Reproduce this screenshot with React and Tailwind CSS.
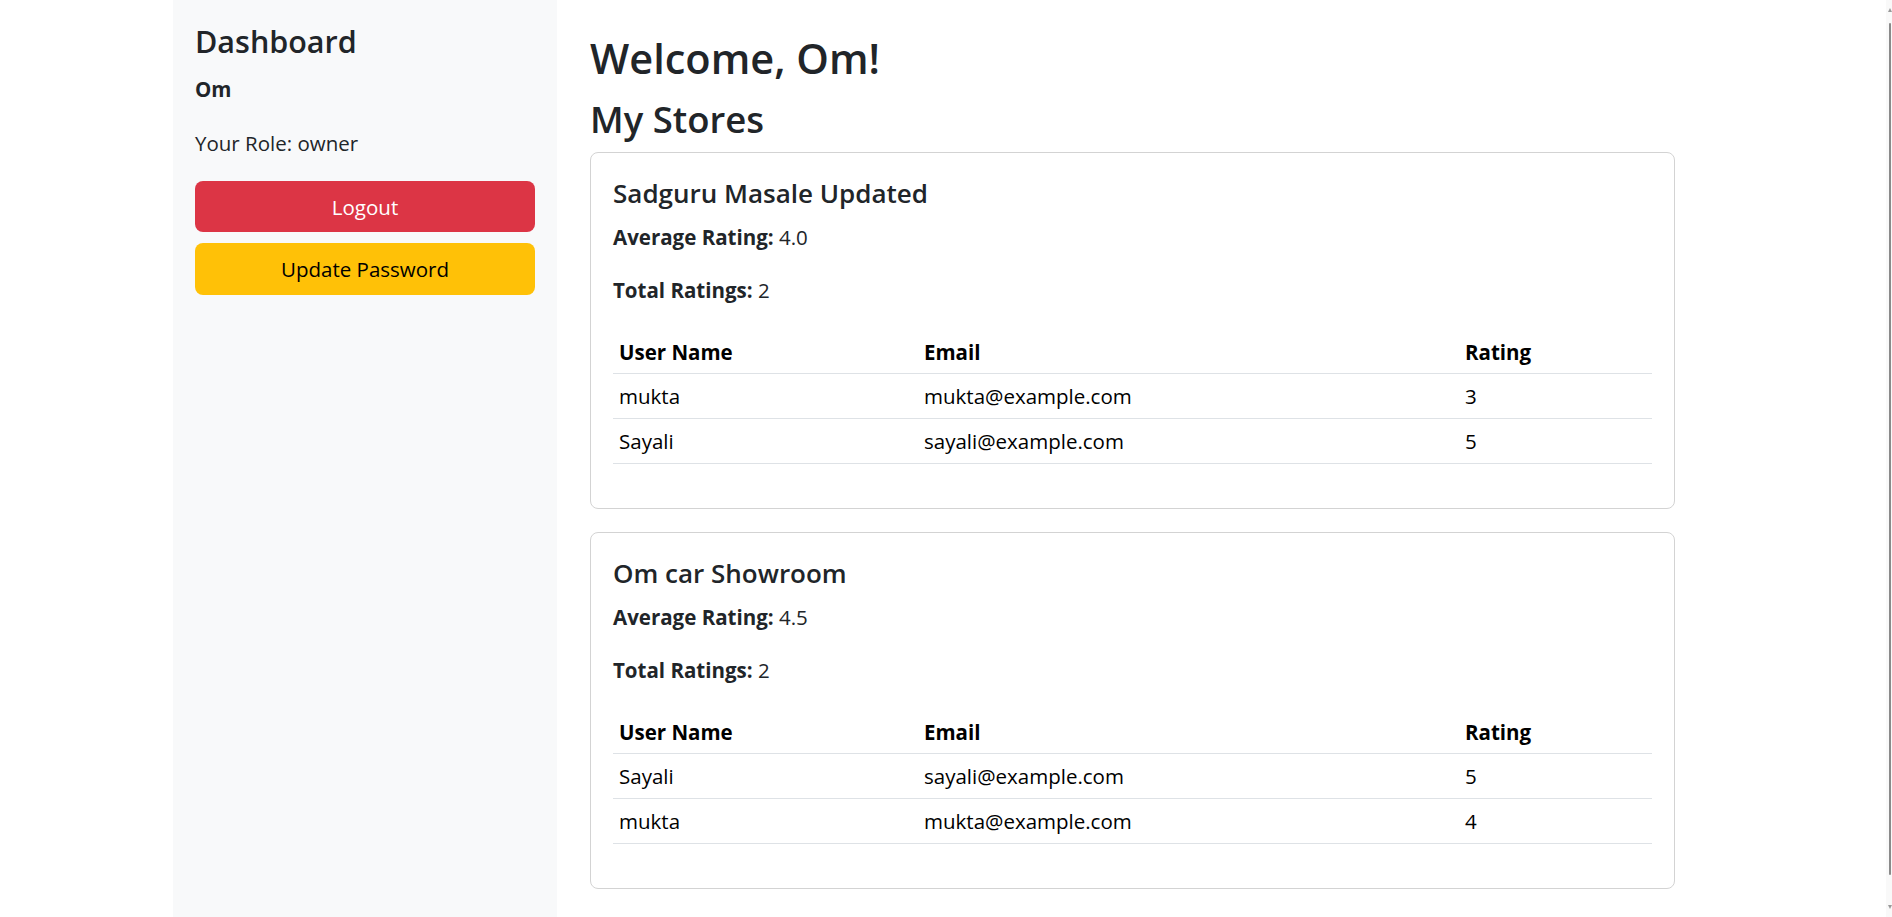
import React from "react";

const stores = [
  {
    name: "Sadguru Masale Updated",
    avg: "4.0",
    total: 2,
    rows: [
      { user: "mukta", email: "mukta@example.com", rating: 3 },
      { user: "Sayali", email: "sayali@example.com", rating: 5 },
    ],
  },
  {
    name: "Om car Showroom",
    avg: "4.5",
    total: 2,
    rows: [
      { user: "Sayali", email: "sayali@example.com", rating: 5 },
      { user: "mukta", email: "mukta@example.com", rating: 4 },
    ],
  },
];

function StoreCard({ store, first }) {
  return (
    <div
      className={`w-[1085px] rounded-[8px] border border-[#d3d3d3] bg-white px-[22px] pt-[23px] pb-[44px] ${
        first ? "mt-[11px]" : "mt-[23px]"
      }`}
    >
      <h4 className="text-[26px] leading-[34px] font-semibold text-[#212529]">{store.name}</h4>
      <p className="mt-[12px] text-[20.5px] leading-[30px] text-[#212529]">
        <span className="font-bold">Average Rating:</span> {store.avg}
      </p>
      <p className="mt-[23px] text-[20.5px] leading-[30px] text-[#212529]">
        <span className="font-bold">Total Ratings:</span> {store.total}
      </p>
      <div className="mt-[24px] w-full text-[20.5px] leading-[30px] text-black">
        <div className="grid h-[45px] grid-cols-[305px_541px_1fr] items-center border-b border-[#dee2e6] pt-[1px] font-bold">
          <div className="pl-[6px]">User Name</div>
          <div className="pl-[6px]">Email</div>
          <div className="pl-[6px]">Rating</div>
        </div>
        {store.rows.map((r, i) => (
          <div
            key={i}
            className="grid h-[45px] grid-cols-[305px_541px_1fr] items-center border-b border-[#dee2e6]"
          >
            <div className="pl-[6px]">{r.user}</div>
            <div className="pl-[6px]">{r.email}</div>
            <div className="pl-[6px]">{r.rating}</div>
          </div>
        ))}
      </div>
    </div>
  );
}

export default function App() {
  return (
    <div className="relative h-[917px] w-[1892px] overflow-hidden bg-white font-['Open_Sans','Noto_Sans',sans-serif] text-[#212529]">
      <div className="flex h-full pl-[173px]">
        <aside className="h-full w-[384px] shrink-0 bg-[#f8f9fa] px-[22px] pt-[21px]">
          <h3 className="text-[30.5px] leading-[40px] font-semibold">Dashboard</h3>
          <p className="mt-[13px] text-[20.5px] leading-[30px] font-bold">Om</p>
          <p className="mt-[24px] text-[20.5px] leading-[30px]">Your Role: owner</p>
          <button className="mt-[23px] flex h-[51px] w-full items-center justify-center rounded-[8px] bg-[#dc3545] text-[20.5px] leading-[30px] text-white">
            Logout
          </button>
          <button className="mt-[11px] flex h-[52px] w-full items-center justify-center rounded-[8px] bg-[#ffc107] text-[20.5px] leading-[30px] text-black">
            Update Password
          </button>
        </aside>
        <main className="pl-[33px] pt-[33px]">
          <h1 className="text-[41.5px] leading-[50px] font-semibold">Welcome, Om!</h1>
          <h2 className="mt-[14px] text-[36.5px] leading-[44px] font-semibold">My Stores</h2>
          {stores.map((s, i) => (
            <StoreCard key={i} store={s} first={i === 0} />
          ))}
        </main>
      </div>

      {/* overlay scrollbar */}
      <div className="absolute right-0 top-0 h-full w-[6px] bg-[#f9f9f9]">
        <div className="absolute left-[2px] top-[8px] h-0 w-0 border-x-[2px] border-b-[4px] border-x-transparent border-b-[#9a9a9a]" />
        <div className="absolute left-[3px] top-[23px] h-[852px] w-[2px] rounded-full bg-[#8a8a8a]" />
        <div className="absolute left-[2px] top-[905px] h-0 w-0 border-x-[2px] border-t-[4px] border-x-transparent border-t-[#9a9a9a]" />
      </div>
    </div>
  );
}
